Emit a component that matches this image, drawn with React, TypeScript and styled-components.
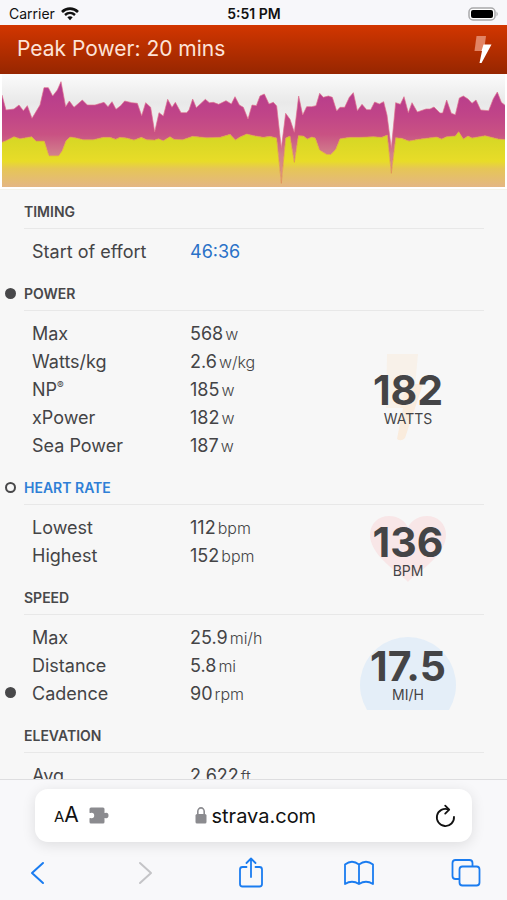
import React from "react";
import styled, { createGlobalStyle, css } from "styled-components";

const GlobalStyle = createGlobalStyle`
  *, *::before, *::after { box-sizing: border-box; }
  body { margin: 0; background: #f7f7f7; }
  button { border: 0; padding: 0; margin: 0; background: none; font: inherit; color: inherit; cursor: pointer; }
`;

const Screen = styled.div`
  display: flex;
  flex-direction: column;
  height: 100vh;
  overflow: hidden;
  background: #f7f7f7;
  color: #444446;
  font-family: Inter, "Liberation Sans", sans-serif;
`;

const StatusBar = styled.div`
  display: grid;
  grid-template-columns: 1fr auto 1fr;
  align-items: center;
  height: 25px;
  padding: 2px 8px 0 9px;
  flex: none;
  background: #f7f7fa;
  color: #111;
  font-size: 14px;
`;

const Carrier = styled.div`
  display: flex;
  align-items: center;
  gap: 6px;
`;

const Clock = styled.time`
  font-weight: 600;
`;

const BatteryIcon = styled.svg`
  justify-self: end;
`;

const TitleBar = styled.header`
  display: flex;
  align-items: center;
  justify-content: space-between;
  flex: none;
  height: 49px;
  padding: 0 14px 2px 17px;
  background: linear-gradient(#d23600, #962600);
  color: #fde3d8;
`;

const Title = styled.h1`
  margin: 0;
  font-size: 21px;
  line-height: 28px;
  font-weight: 400;
`;

const ChartFrame = styled.div`
  flex: none;
  padding: 0 2px 2px;
  background: #fff;
  border-bottom: 1px solid #f4f2ea;

  svg {
    display: block;
    width: 100%;
    height: 113px;
  }
`;

const Content = styled.main`
  flex: 1;
  min-height: 0;
  overflow: hidden;
  padding: 12px 23px 0 0;
`;

const Section = styled.section`
  margin-bottom: 18px;
`;

const Line = styled.div`
  display: grid;
  grid-template-columns: 24px 1fr;
`;

const Marker = styled.span<{ $filled?: boolean }>`
  width: 11px;
  height: 11px;
  margin: 4px 0 0 5px;
  border-radius: 50%;
  border: 2px solid #48484a;
  ${(p) => p.$filled && css`background: #48484a;`}
`;

const Heading = styled.h2<{ $link?: boolean }>`
  grid-column: 2;
  margin: 0;
  padding-bottom: 6px;
  border-bottom: 1px solid #e8e8e8;
  font-size: 14px;
  line-height: 20px;
  font-weight: 600;
  text-transform: uppercase;
  color: ${(p) => (p.$link ? "#2f7fd6" : "#48484a")};

  a { color: inherit; text-decoration: none; }
`;

const SectionBody = styled.div`
  display: grid;
  grid-template-columns: 1fr 152px;
  align-items: center;
  padding-top: 9px;
`;

const Stats = styled.dl`
  margin: 0;
`;

const Stat = styled.div`
  display: grid;
  grid-template-columns: 32px 158px 1fr;
  font-size: 18px;
  line-height: 28px;

  ${Marker} { margin-top: 7px; }
`;

const StatLabel = styled.dt`
  grid-column: 2;
  white-space: nowrap;

  sup {
    font-size: 10px;
    line-height: 1;
  }
`;

const StatValue = styled.dd`
  margin: 0;
  white-space: nowrap;

  a { color: #2a72c8; text-decoration: none; }
`;

const Unit = styled.span`
  margin-left: 2px;
  font-size: 16px;
  font-weight: 300;
`;

const Highlight = styled.div`
  position: relative;
  display: flex;
  flex-direction: column;
  align-items: center;
  padding-top: 18px;
  margin: -20px 0;

  svg {
    position: absolute;
    top: calc(50% + 7px);
    left: 50%;
    transform: translate(-50%, -50%);
  }
`;

const HighlightValue = styled.strong`
  position: relative;
  font-size: 41px;
  line-height: 40px;
  font-weight: 700;
`;

const HighlightUnit = styled.span`
  position: relative;
  font-size: 14px;
  line-height: 18px;
`;

const BrowserBar = styled.footer`
  flex: none;
  padding: 9px 35px 0;
  height: 121px;
  border-top: 1px solid #dedee0;
  background: #f8f8fa;
`;

const AddressCard = styled.div`
  display: grid;
  grid-template-columns: 1fr auto 1fr;
  align-items: center;
  height: 53px;
  padding: 0 16px 0 19px;
  border-radius: 13px;
  background: #fff;
  color: #111;
  box-shadow: 0 3px 14px rgba(0, 0, 0, 0.11);
`;

const PageTools = styled.div`
  display: flex;
  align-items: center;
  gap: 10px;
`;

const TextSizeButton = styled.button`
  font-size: 21px;
  line-height: 24px;

  small { font-size: 15px; }
`;

const IconButton = styled.button`
  display: block;
  svg { display: block; }
`;

const ReloadButton = styled(IconButton)`
  justify-self: end;
`;

const Address = styled.label`
  display: flex;
  align-items: center;
  gap: 5px;
`;

const AddressInput = styled.input`
  width: 104px;
  field-sizing: content;
  padding: 0;
  border: 0;
  outline: 0;
  background: none;
  color: inherit;
  font: 400 20px/24px Inter, "Liberation Sans", sans-serif;
`;

const NavRow = styled.nav`
  display: flex;
  align-items: center;
  justify-content: space-between;
  height: 62px;
  margin: 0 -9px 0 -12px;
  color: #1a7cf0;
`;

const upper: number[][] = [
  [6,75],[18,120],[42,117],[57,105],[70,122],[82,107],[96,145],[120,105],[132,53],[145,53],[158,78],[172,60],[183,35],[197,110],[208,93],[222,112],[247,90],[262,105],[285,105],[312,97],[324,110],[336,95],[348,118],[362,107],[374,93],[395,98],[412,100],[425,137],[437,98],[452,112],[464,186],[477,128],[490,138],[503,88],
  [516,112],[526,97],[543,128],[560,128],[567,120],[578,87],[589,113],[616,88],[628,98],[640,97],[656,103],[678,92],[694,102],[705,80],[718,105],[730,112],[744,147],[756,105],[769,107],[780,78],[793,72],[807,102],[820,97],[830,108],[844,235],[857,130],[870,148],[883,187],[896,78],[908,135],[920,110],[935,110],[948,107],[959,70],[970,82],[985,78],[997,82],[1010,123],
  [1020,112],[1034,112],[1048,82],[1060,68],[1072,122],[1086,103],[1100,119],[1112,119],[1124,96],[1138,102],[1151,95],[1161,135],[1174,235],[1187,98],[1201,103],[1212,80],[1225,128],[1236,98],[1252,126],[1278,117],[1290,117],[1302,111],[1320,129],[1328,129],[1340,90],[1354,130],[1366,134],[1378,84],[1390,78],[1404,87],[1416,100],[1428,90],[1442,120],[1466,122],[1480,86],[1492,66],[1504,97],[1518,108],
];

const lower: number[][] = [
  [6,217],[18,212],[42,200],[60,206],[95,200],[108,213],[133,213],[147,257],[176,257],[186,243],[198,212],[210,201],[225,203],[250,209],[280,209],[310,202],[330,202],[347,208],[360,202],[380,204],[402,210],[424,202],[440,209],[464,210],[475,206],[490,212],
  [510,200],[522,208],[548,209],[578,199],[620,203],[660,202],[690,193],[706,210],[720,201],[740,192],[762,197],[790,202],[810,199],[830,204],[844,340],[857,204],[870,198],[883,277],[895,197],[910,198],[922,207],[935,201],[946,204],[959,240],[980,253],[993,253],[1007,238],
  [1020,206],[1050,202],[1080,202],[1120,200],[1145,202],[1162,195],[1174,310],[1187,203],[1205,205],[1227,213],[1255,208],[1285,204],[1310,201],[1325,207],[1340,200],[1366,198],[1376,185],[1390,207],[1404,198],[1416,204],[1455,197],[1495,207],[1518,209],
];

const toPoints = (p: number[][]) => p.map((v) => v.join(",")).join(" ");

function EffortChart() {
  return (
    <ChartFrame>
      <svg viewBox="6 12 1509 339" preserveAspectRatio="none" role="img" aria-label="Effort profile">
        <defs>
          <linearGradient id="sky" gradientUnits="userSpaceOnUse" x1="0" y1="12" x2="0" y2="351">
            <stop offset="0" stopColor="#fbfbfb" />
            <stop offset="0.25" stopColor="#e9e9e9" />
            <stop offset="0.6" stopColor="#f6f6f6" />
          </linearGradient>
          <linearGradient id="band" gradientUnits="userSpaceOnUse" x1="0" y1="35" x2="0" y2="340">
            <stop offset="0" stopColor="#b43a8e" />
            <stop offset="0.32" stopColor="#c04488" />
            <stop offset="0.52" stopColor="#c95283" />
            <stop offset="0.72" stopColor="#d2808c" />
            <stop offset="1" stopColor="#e09c78" />
          </linearGradient>
          <linearGradient id="base" gradientUnits="userSpaceOnUse" x1="0" y1="190" x2="0" y2="351">
            <stop offset="0" stopColor="#d3d624" />
            <stop offset="0.52" stopColor="#e8dc28" />
            <stop offset="0.66" stopColor="#e6c656" />
            <stop offset="1" stopColor="#e4b684" />
          </linearGradient>
        </defs>
        <rect x="6" y="12" width="1512" height="339" fill="url(#sky)" />
        <polygon
          points={`${toPoints(upper)} ${toPoints([...lower].reverse())}`}
          fill="url(#band)"
        />
        <polygon points={`${toPoints(lower)} 1518,351 6,351`} fill="url(#base)" />
        <polyline points={toPoints(upper)} fill="none" stroke="#e0708c" strokeWidth="2" />
        <polyline points={toPoints(lower)} fill="none" stroke="#e08a50" strokeWidth="2" />
      </svg>
    </ChartFrame>
  );
}

const BoltArt = () => (
  <svg width="50" height="90" viewBox="0 0 50 90" aria-hidden="true">
    <path d="M4 2H35L30 56H3Z" fill="#f8f1e9" />
    <path d="M24 32H40L22 86Q18 90 14 87L20 56H17Z" fill="#faecdd" />
  </svg>
);

const HeartArt = () => (
  <svg width="78" height="68" viewBox="0 0 78 68" aria-hidden="true">
    <path d="M39 67C35 61 1 42 1 20C1 8 10 1 20 1C30 1 37 7 39 13C41 7 48 1 58 1C68 1 77 8 77 20C77 42 43 61 39 67Z" fill="#f8e6e7" />
  </svg>
);

const DialArt = () => (
  <svg width="98" height="76" viewBox="0 0 98 76" aria-hidden="true">
    <path d="M8 75A48 48 0 1 1 90 75Z" fill="#e4eef8" />
  </svg>
);

type StatItem = { label: React.ReactNode; value: string; unit?: string; marked?: boolean; href?: string };
type Group = {
  title: string;
  marker?: "filled" | "open";
  link?: boolean;
  stats: StatItem[];
  highlight?: { value: string; unit: string; art: React.ReactNode };
};

const groups: Group[] = [
  { title: "Timing", stats: [{ label: "Start of effort", value: "46:36", href: "#effort" }] },
  {
    title: "Power",
    marker: "filled",
    stats: [
      { label: "Max", value: "568", unit: "w" },
      { label: "Watts/kg", value: "2.6", unit: "w/kg" },
      { label: <>NP<sup>®</sup></>, value: "185", unit: "w" },
      { label: "xPower", value: "182", unit: "w" },
      { label: "Sea Power", value: "187", unit: "w" },
    ],
    highlight: { value: "182", unit: "WATTS", art: <BoltArt /> },
  },
  {
    title: "Heart Rate",
    marker: "open",
    link: true,
    stats: [
      { label: "Lowest", value: "112", unit: "bpm" },
      { label: "Highest", value: "152", unit: "bpm" },
    ],
    highlight: { value: "136", unit: "BPM", art: <HeartArt /> },
  },
  {
    title: "Speed",
    stats: [
      { label: "Max", value: "25.9", unit: "mi/h" },
      { label: "Distance", value: "5.8", unit: "mi" },
      { label: "Cadence", value: "90", unit: "rpm", marked: true },
    ],
    highlight: { value: "17.5", unit: "MI/H", art: <DialArt /> },
  },
  { title: "Elevation", stats: [{ label: "Avg", value: "2,622", unit: "ft" }] },
];

function StatGroup({ group }: { group: Group }) {
  return (
    <Section>
      <Line>
        {group.marker && <Marker $filled={group.marker === "filled"} />}
        <Heading $link={group.link}>
          {group.link ? <a href="#heart-rate">{group.title}</a> : group.title}
        </Heading>
      </Line>
      <SectionBody>
        <Stats>
          {group.stats.map((s, i) => (
            <Stat key={i}>
              {s.marked && <Marker as="dt" aria-hidden="true" $filled />}
              <StatLabel>{s.label}</StatLabel>
              <StatValue>
                {s.href ? <a href={s.href}>{s.value}</a> : s.value}
                {s.unit && <Unit>{s.unit}</Unit>}
              </StatValue>
            </Stat>
          ))}
        </Stats>
        {group.highlight && (
          <Highlight>
            {group.highlight.art}
            <HighlightValue>{group.highlight.value}</HighlightValue>
            <HighlightUnit>{group.highlight.unit}</HighlightUnit>
          </Highlight>
        )}
      </SectionBody>
    </Section>
  );
}

export default function App() {
  return (
    <Screen>
      <GlobalStyle />
      <StatusBar>
        <Carrier>
          Carrier
          <svg width="18" height="14" viewBox="0 0 18 14" fill="none" stroke="#111" aria-label="Wi-Fi">
            <path d="M1 5C5.500 0.500 12.500 0.500 17 5" strokeWidth="2.600" />
            <path d="M4 8C7 5.200 11 5.200 14 8" strokeWidth="2.400" />
            <path d="M6.300 10.300Q9 8 11.700 10.300L9 13.200Z" fill="#111" stroke="none" />
          </svg>
        </Carrier>
        <Clock>5:51 PM</Clock>
        <BatteryIcon width="31" height="14" viewBox="0 0 31 14" aria-label="Battery full">
          <rect x="1" y="1" width="26" height="12" rx="4" fill="#fff" stroke="#a9a9ab" strokeWidth="1.500" />
          <rect x="3" y="3" width="22" height="8" rx="2" fill="#000" />
          <path d="M28.500 4.500Q31 7 28.500 9.500Z" fill="#a9a9ab" />
        </BatteryIcon>
      </StatusBar>

      <TitleBar>
        <Title>Peak Power: 20 mins</Title>
        <IconButton type="button" aria-label="Power details">
          <svg width="20" height="28" viewBox="0 0 20 28">
            <path d="M3.500 1H13L11 16H1.500Z" fill="#e28464" />
            <path d="M10.500 9.500H18.500L8.500 28H6.500L9 16H8.500Z" fill="#fff" />
          </svg>
        </IconButton>
      </TitleBar>

      <EffortChart />

      <Content>
        {groups.map((g) => <StatGroup key={g.title} group={g} />)}
      </Content>

      <BrowserBar>
        <AddressCard>
          <PageTools>
            <TextSizeButton type="button" aria-label="Text size"><small>A</small>A</TextSizeButton>
            <IconButton type="button" aria-label="Extensions">
              <svg width="20" height="17" viewBox="0 0 20 17" fill="#8b8b8f">
                <path d="M2 .5H14Q15.500 .5 15.500 2V6Q16 6.300 16.800 5.800Q19.500 5.500 19.500 8.500Q19.500 11.500 16.800 11.200Q16 10.700 15.500 11V15Q15.500 16.500 14 16.500H2Q.5 16.500 .5 15V11.300Q1.300 10.700 2.200 11.200Q5.200 11.500 5.200 8.500Q5.200 5.500 2.200 5.800Q1.300 6.300 .5 5.700V2Q.5 .5 2 .5Z" />
              </svg>
            </IconButton>
          </PageTools>
          <Address>
            <svg width="12" height="17" viewBox="0 0 12 17" aria-hidden="true">
              <path d="M2.800 8V4.500A3.200 3.600 0 0 1 9.200 4.500V8" fill="none" stroke="#8b8b8f" strokeWidth="1.600" />
              <rect x="0.500" y="7" width="11" height="9.500" rx="1.500" fill="#8b8b8f" />
            </svg>
            <AddressInput type="text" aria-label="Address" defaultValue="strava.com" />
          </Address>
          <ReloadButton type="button" aria-label="Reload">
            <svg width="22" height="24" viewBox="0 0 22 24" fill="none" stroke="#111" strokeWidth="1.800" strokeLinecap="round" strokeLinejoin="round">
              <path d="M20 12.800A8.600 8.600 0 1 1 14.500 5.400" />
              <path d="M11.200 1.600L15.200 5.600L11.200 9.600" />
            </svg>
          </ReloadButton>
        </AddressCard>
        <NavRow aria-label="Browser">
          <IconButton type="button" aria-label="Back">
            <svg width="30" height="30" viewBox="0 0 30 30" fill="none" stroke="currentColor" strokeWidth="2" strokeLinecap="round" strokeLinejoin="round">
              <path d="M20 5L9 15L20 25" />
            </svg>
          </IconButton>
          <IconButton type="button" aria-label="Forward" disabled>
            <svg width="30" height="30" viewBox="0 0 30 30" fill="none" stroke="#c4c4c7" strokeWidth="2" strokeLinecap="round" strokeLinejoin="round">
              <path d="M10 5L21 15L10 25" />
            </svg>
          </IconButton>
          <IconButton type="button" aria-label="Share">
            <svg width="30" height="34" viewBox="0 0 30 34" fill="none" stroke="currentColor" strokeWidth="1.800" strokeLinecap="round" strokeLinejoin="round">
              <path d="M10.500 11H6.500Q4 11 4 13.500V28Q4 30.500 6.500 30.500H23.500Q26 30.500 26 28V13.500Q26 11 23.500 11H19.500" />
              <path d="M15 21V3M10.500 7L15 2.500L19.500 7" />
            </svg>
          </IconButton>
          <IconButton type="button" aria-label="Bookmarks">
            <svg width="32" height="28" viewBox="0 0 32 28" fill="none" stroke="currentColor" strokeWidth="1.800" strokeLinecap="round" strokeLinejoin="round">
              <path d="M16 5.500Q9 0 2 5.500V25Q9 20.500 16 25Q23 20.500 30 25V5.500Q23 0 16 5.500ZM16 5.500V25" />
            </svg>
          </IconButton>
          <IconButton type="button" aria-label="Tabs">
            <svg width="30" height="30" viewBox="0 0 30 30" fill="none" stroke="currentColor" strokeWidth="1.800" strokeLinejoin="round">
              <rect x="8.500" y="8.500" width="20" height="19" rx="3" />
              <path d="M8.500 21H4.500Q1.500 21 1.500 18V5Q1.500 2 4.500 2H18.500Q21.500 2 21.500 5V8.500" />
            </svg>
          </IconButton>
        </NavRow>
      </BrowserBar>
    </Screen>
  );
}
